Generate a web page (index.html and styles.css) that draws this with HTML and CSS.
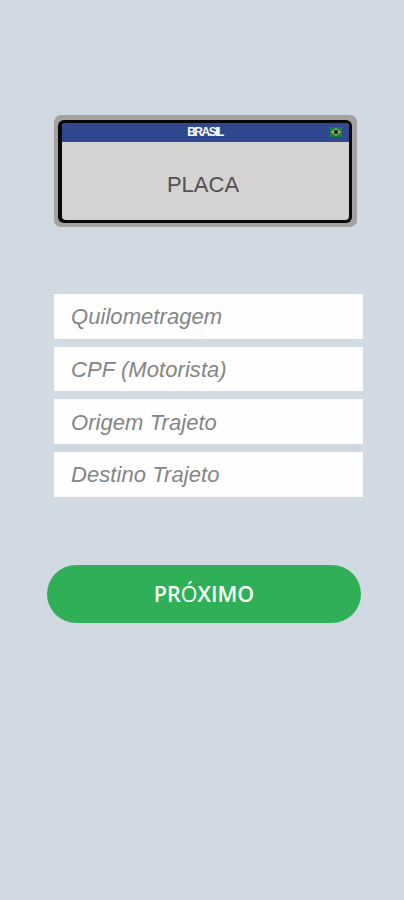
FILE: index.html
```html
<!DOCTYPE html>
<html lang="pt-BR">
<head>
<meta charset="utf-8">
<title>Trajeto</title>
<link rel="stylesheet" href="styles.css">
</head>
<body>
<form class="screen">
  <div class="plate">
    <div class="plate-frame">
      <div class="plate-body">
        <div class="plate-header">
          <span class="country">BRASIL</span>
          <svg class="flag" viewBox="0 0 12 10" aria-hidden="true">
            <rect width="12" height="10" fill="#15803f"/>
            <path d="M0.8 5 6 1.2 11.2 5 6 8.8Z" fill="#a9b83f"/>
            <circle cx="6" cy="5" r="2.2" fill="#182447"/>
          </svg>
        </div>
        <div class="plate-number"><span>PLACA</span></div>
      </div>
    </div>
  </div>
  <div class="fields">
    <div class="field"><span>Quilometragem</span></div>
    <div class="field"><span>CPF (Motorista)</span></div>
    <div class="field"><span>Origem Trajeto</span></div>
    <div class="field"><span>Destino Trajeto</span></div>
  </div>
  <button class="next" type="button"><span>PR<span class="accent">Ó</span>XIMO</span></button>
</form>
</body>
</html>
```
FILE: styles.css
```css
* { box-sizing: border-box; }
body {
  margin: 0;
  background: #d1d9e2;
  font-family: "Liberation Sans", Arial, sans-serif;
}
.screen {
  display: flex;
  flex-direction: column;
  height: 900px;
  padding: 115px 41.5px 0 54px;
}
.plate {
  width: 303px;
  height: 112px;
  padding: 5px 5px 4px 4px;
  border-radius: 7px;
  background: #a4a1a1;
}
.plate-frame {
  height: 100%;
  padding: 3px 3px 3px 4px;
  border-radius: 6px;
  background: #080808;
}
.plate-body {
  display: flex;
  flex-direction: column;
  height: 100%;
  overflow: hidden;
  border-radius: 4px;
  background: #d4d3d2;
}
.plate-header {
  display: grid;
  grid-template-columns: 1fr auto 1fr;
  align-items: center;
  height: 19px;
  padding-right: 7px;
  background: #30488f;
}
.country {
  grid-column: 2;
  margin: 0 -3px 0 3px;
  color: #fff;
  font-size: 12px;
  font-weight: 700;
  line-height: 19px;
  letter-spacing: -1.5px;
}
.flag {
  justify-self: end;
  width: 12px;
  height: 10px;
  margin-top: -1px;
}
.plate-number {
  display: flex;
  flex: 1;
  align-items: center;
  justify-content: center;
  padding: 8px 5px 0 0;
  color: #51504f;
  font-size: 22px;
}
.fields {
  display: grid;
  gap: 8.2px;
  margin-top: 67px;
}
.field {
  display: flex;
  align-items: center;
  height: 44.5px;
  padding: 2px 0 0 17px;
  background: #fefefe;
  color: #858585;
  font-size: 22px;
  font-style: italic;
  letter-spacing: 0.06px;
}
.next {
  width: 314px;
  height: 58px;
  margin: 68px 0 0 -7px;
  padding: 0;
  border: 0;
  border-radius: 29px;
  background: #2fb056;
  color: #f7fff8;
  font: 600 21.5px "Open Sans", sans-serif;
}
.accent {
  font-weight: 400;
}
```
